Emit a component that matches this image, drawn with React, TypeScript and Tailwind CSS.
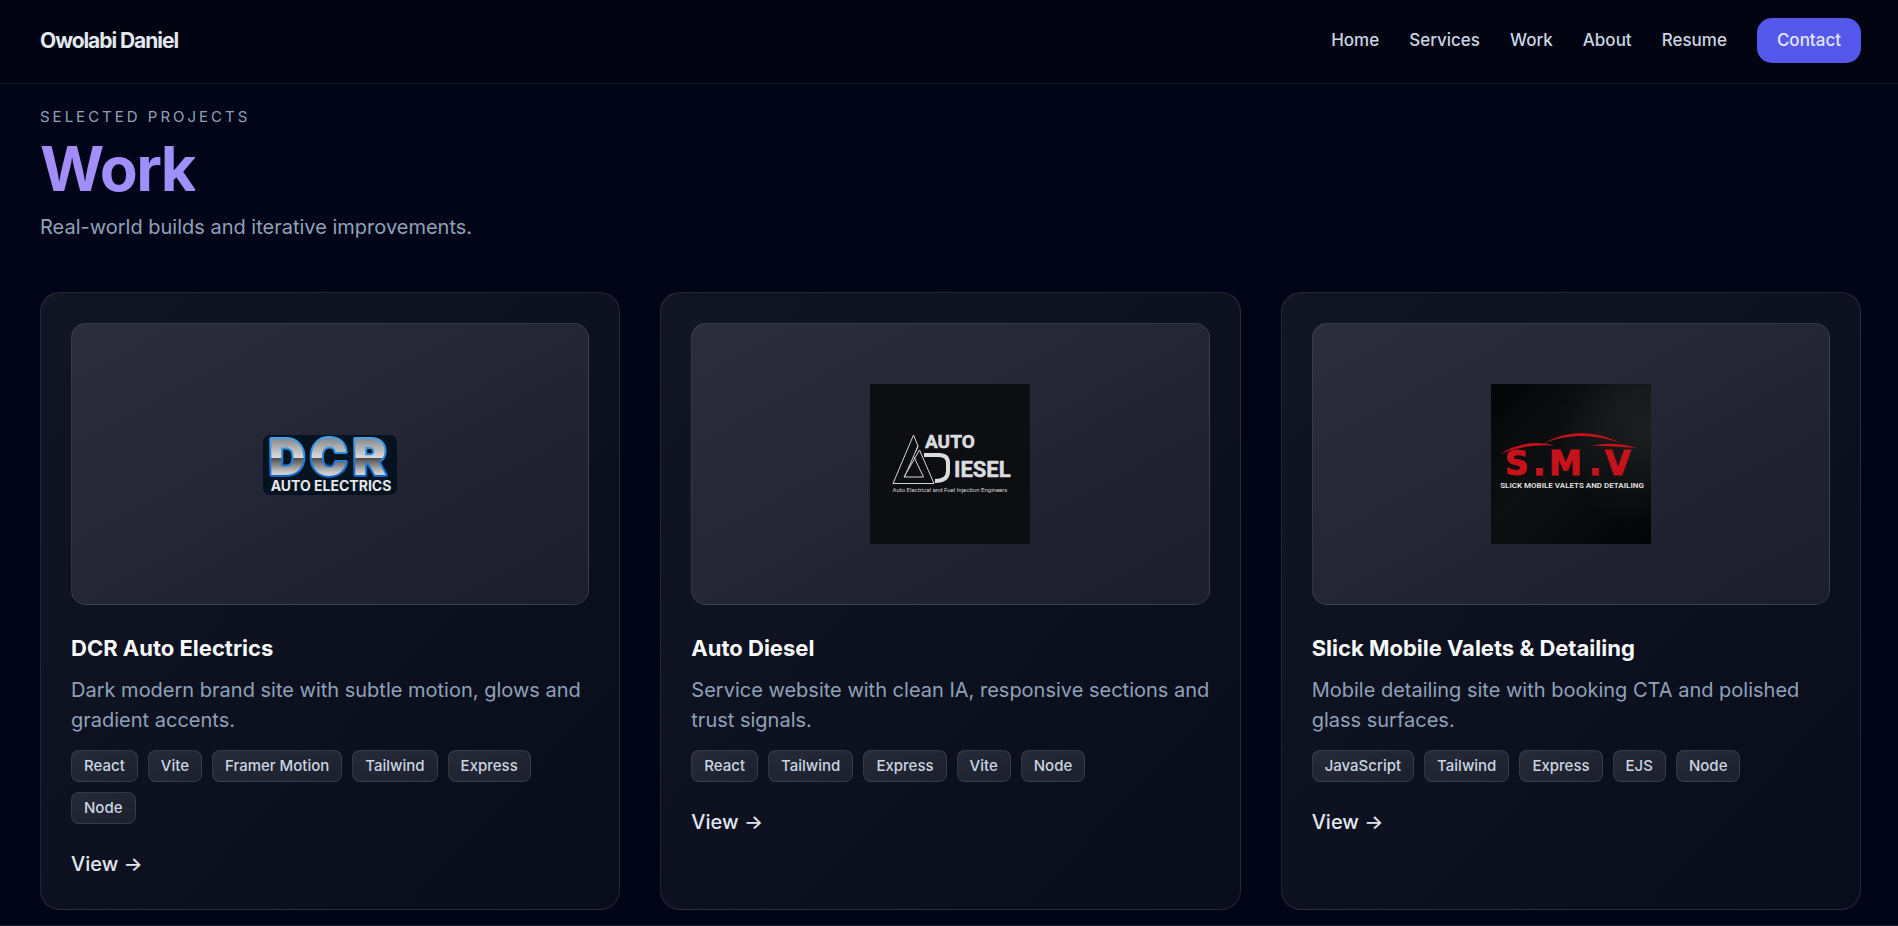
import type { ReactNode } from "react";

const NAV = ["Home", "Services", "Work", "About", "Resume"];

type Project = {
  title: string;
  description: string;
  tags: string[];
  logo: ReactNode;
};

function DcrLogo() {
  return (
    <svg width="160" height="160" viewBox="0 0 160 160" role="img" aria-label="DCR Auto Electrics">
      <defs>
        <linearGradient id="chrome" x1="0" y1="54" x2="0" y2="93" gradientUnits="userSpaceOnUse">
          <stop offset="0" stopColor="#85888b" />
          <stop offset="0.5" stopColor="#dadadb" />
          <stop offset="0.52" stopColor="#4d4d50" />
          <stop offset="0.9" stopColor="#cfcfd0" />
        </linearGradient>
        <linearGradient id="rim" x1="0" y1="54" x2="0" y2="93" gradientUnits="userSpaceOnUse">
          <stop offset="0" stopColor="#3fa5f0" />
          <stop offset="1" stopColor="#0b62cf" />
        </linearGradient>
      </defs>
      <rect x="13" y="51" width="134" height="60" rx="7" fill="#04131f" />
      <text
        x="19 60 103"
        y="91"
        fontFamily="Inter, 'Liberation Sans', sans-serif"
        fontWeight="900"
        fontSize="50"
        fill="url(#chrome)"
        stroke="url(#rim)"
        strokeWidth="4"
        strokeLinejoin="round"
        paintOrder="stroke"
      >
        DCR
      </text>
      <text
        x="81"
        y="107"
        textAnchor="middle"
        fontFamily="Inter, 'Liberation Sans', sans-serif"
        fontWeight="700"
        fontSize="14"
        fill="#e4e7ea"
      >
        AUTO ELECTRICS
      </text>
    </svg>
  );
}

function AutoDieselLogo() {
  return (
    <svg width="160" height="160" viewBox="0 0 160 160" role="img" aria-label="Auto Diesel">
      <rect width="160" height="160" fill="#0d0e10" />
      <g fill="none" stroke="#d6d7da" strokeWidth="1">
        <path d="M46 67 L48 62 L43.500 51 L23 99.500 H64 L49.500 66 L34 93 H53.500 L44 73" />
        <path d="M48 62 L34.500 93" />
      </g>
      <path
        d="M54 71 H69 Q78 71 78 79 V87 Q78 97 65 97"
        fill="none"
        stroke="#dcdde0"
        strokeWidth="4"
      />
      <g
        fontFamily="Roboto, sans-serif"
        fontWeight="700"
        fill="#dcdde0"
        stroke="#dcdde0"
        strokeWidth="0.5"
      >
        <text x="55" y="64" fontSize="19">AUTO</text>
        <text x="84" y="93" fontSize="22">IESEL</text>
      </g>
      <text
        x="80"
        y="108"
        textAnchor="middle"
        fontFamily="Roboto, sans-serif"
        fontSize="6"
        fill="#d2d3d6"
      >
        Auto Electrical and Fuel Injection Engineers
      </text>
    </svg>
  );
}

function SmvLogo() {
  return (
    <svg width="160" height="160" viewBox="0 0 160 160" role="img" aria-label="Slick Mobile Valets and Detailing">
      <defs>
        <linearGradient id="sheen" x1="0" y1="0" x2="1" y2="1">
          <stop offset="0" stopColor="#040506" />
          <stop offset="0.45" stopColor="#0d0f10" />
          <stop offset="1" stopColor="#030405" />
        </linearGradient>
        <radialGradient id="glow" cx="1" cy="0.3" r="0.6">
          <stop offset="0" stopColor="#ffffff" stopOpacity="0.08" />
          <stop offset="1" stopColor="#ffffff" stopOpacity="0" />
        </radialGradient>
      </defs>
      <rect width="160" height="160" fill="url(#sheen)" />
      <rect width="160" height="160" fill="url(#glow)" />
      <g fill="#c5121b">
        <path d="M9 70 Q34 54 64 61.500 Q35 59.500 9 70 Z" />
        <path d="M53 59 Q90 39 129 59 Q90 45 53 59 Z" />
        <path d="M100 61.500 Q124 57 146 64 Q124 62 100 61.500 Z" />
      </g>
      <text
        x="14 42 58 98 114"
        y="91"
        fontFamily="'DejaVu Sans', sans-serif"
        fontWeight="700"
        fontSize="33"
        fill="#c5121b"
        stroke="#c5121b"
        strokeWidth="1"
      >
        S.M.V
      </text>
      <text
        x="81"
        y="104"
        textAnchor="middle"
        fontFamily="Roboto, sans-serif"
        fontWeight="700"
        fontSize="8"
        fill="#dcdcdc"
      >
        SLICK MOBILE VALETS AND DETAILING
      </text>
    </svg>
  );
}

const PROJECTS: Project[] = [
  {
    title: "DCR Auto Electrics",
    description: "Dark modern brand site with subtle motion, glows and gradient accents.",
    tags: ["React", "Vite", "Framer Motion", "Tailwind", "Express", "Node"],
    logo: <DcrLogo />,
  },
  {
    title: "Auto Diesel",
    description: "Service website with clean IA, responsive sections and trust signals.",
    tags: ["React", "Tailwind", "Express", "Vite", "Node"],
    logo: <AutoDieselLogo />,
  },
  {
    title: "Slick Mobile Valets & Detailing",
    description: "Mobile detailing site with booking CTA and polished glass surfaces.",
    tags: ["JavaScript", "Tailwind", "Express", "EJS", "Node"],
    logo: <SmvLogo />,
  },
];

function ProjectCard({ title, description, tags, logo }: Project) {
  return (
    <article className="rounded-[20px] border border-white/10 bg-linear-to-br from-[#121524] to-[#090c1b] p-[30px]">
      <div className="flex h-[282px] items-center justify-center rounded-[15px] border border-white/10 bg-linear-to-br from-[#2b2d3b] to-[#1c1e2d]">
        {logo}
      </div>
      <h2 className="mt-[26px] text-[22px] leading-[35px] font-bold text-slate-50">{title}</h2>
      <p className="mt-[9px] text-[20px] leading-[30px] text-slate-400">{description}</p>
      <ul className="mt-[15px] flex flex-wrap gap-[10px]">
        {tags.map((tag) => (
          <li
            key={tag}
            className="rounded-lg border border-white/10 bg-linear-to-br from-[#272a37] to-[#1c1f2d] px-3 py-[5px] text-[15px] leading-5 font-medium text-slate-300"
          >
            {tag}
          </li>
        ))}
      </ul>
      <a href="#view" className="mt-[25px] inline-block text-[20px] leading-[30px] font-medium text-slate-200">
        View →
      </a>
    </article>
  );
}

export default function App() {
  return (
    <div className="min-h-screen bg-[#020517] font-[Inter,'Liberation_Sans',sans-serif]">
      <header className="flex items-center justify-between border-b border-white/8 bg-[#020412] pt-[18px] pr-[37px] pb-5 pl-10">
        <a href="#top" className="text-[21px] leading-[30px] font-bold tracking-tighter text-slate-200">
          Owolabi Daniel
        </a>
        <nav className="flex items-center gap-[30px] text-[17px] leading-[25px] font-medium text-slate-300">
          {NAV.map((item) => (
            <a key={item} href={"#" + item.toLowerCase()}>
              {item}
            </a>
          ))}
          <a href="#contact" className="rounded-[15px] bg-[#5558eb] px-5 py-[10px] text-slate-200">
            Contact
          </a>
        </nav>
      </header>
      <main className="pt-[23px] pr-[37px] pb-[15px] pl-10">
        <p className="text-[15px] leading-5 tracking-[3px] text-slate-400 uppercase">Selected Projects</p>
        <h1 className="mt-[11px] w-fit text-[62px] leading-[62px] font-bold tracking-tight">
          <span className="bg-linear-to-br from-[#a78bfa] to-[#9a92fb] bg-clip-text text-transparent">Work</span>
        </h1>
        <p className="mt-[12px] text-[20px] leading-[30px] text-slate-400">Real-world builds and iterative improvements.</p>
        <div className="mt-[50px] grid grid-cols-3 gap-10">
          {PROJECTS.map((project) => (
            <ProjectCard key={project.title} {...project} />
          ))}
        </div>
      </main>
      <footer className="border-t border-white/10" />
    </div>
  );
}
